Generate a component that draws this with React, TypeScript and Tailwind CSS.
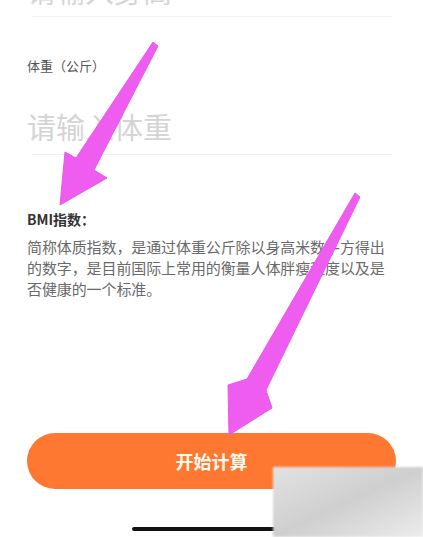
import React from "react";

export default function App() {
  return (
    <div
      className="relative w-[423px] h-[537px] overflow-hidden bg-white"
      style={{ fontFamily: '"Noto Sans CJK SC", "Noto Sans", sans-serif' }}
    >
      <div className="flex flex-col px-[27px]">
        <p className="-mt-[24px] text-[29px] leading-[28px] text-[#d6d6d6]">请输入身高</p>
        <div className="mt-[12px] ml-[5px] mr-[4px] h-px bg-[#efefef]" />
        <p className="mt-[41px] text-[13px] leading-[16px] text-[#555]">体重（公斤）</p>
        <p className="mt-[36px] text-[29px] leading-[32px] text-[#d4d4d4]">请输入体重</p>
        <div className="mt-[12px] ml-[5px] mr-[4px] h-px bg-[#efefef]" />
        <p className="mt-[54px] text-[14px] leading-[20px] font-bold text-[#333]">BMI指数：</p>
        <p className="mt-[7px] text-[15px] leading-[21px] text-[#6a6a6a] tracking-[-0.1px]">
          简称体质指数，是通过体重公斤除以身高米数平方得出的数字，是目前国际上常用的衡量人体胖瘦程度以及是否健康的一个标准。
        </p>
        <button className="mt-[134px] h-[56px] w-full rounded-full bg-[#ff7832] text-[18px] font-bold text-[#fff8ee] flex items-center justify-center">
          开始计算
        </button>
        <div className="mt-[38px] mx-auto h-[4px] w-[159px] rounded-full bg-[#111]" />
      </div>

      <svg className="absolute inset-0 pointer-events-none" width="423" height="537" viewBox="0 0 423 537">
        <polygon
          points="153,42 158,46 94,170 107,178 60,205 65,152 76,158"
          fill="#ee5cf0"
          stroke="#e85ae8"
          strokeWidth="1"
          strokeLinejoin="round"
        />
        <polygon
          points="355,193 360,197 266,390 272,408 229,435 228,385 247,379"
          fill="#ee5cf0"
          stroke="#e85ae8"
          strokeWidth="1"
          strokeLinejoin="round"
        />
      </svg>

      <div className="absolute left-[273px] top-[467px] w-[150px] h-[70px] bg-gradient-to-br from-[#e2e2e2] via-[#cfcfcf] to-[#ececec] blur-[1px]" />
    </div>
  );
}
